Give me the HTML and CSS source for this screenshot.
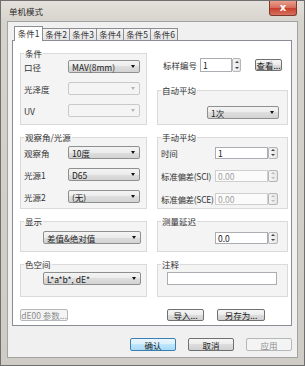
FILE: index.html
```html
<!DOCTYPE html>
<html>
<head>
  <title>单机模式</title>
  <link rel="stylesheet" href="styles.css">
</head>
<body>

  <div class="window">
    <div class="titlebar">
      <span class="title">单机模式</span>
      <span class="close">x</span>
    </div>

    <div class="client">
      <div class="tabs">
        <span class="tab active">条件1</span>
        <span class="tab">条件2</span>
        <span class="tab">条件3</span>
        <span class="tab">条件4</span>
        <span class="tab">条件5</span>
        <span class="tab">条件6</span>
      </div>

      <div class="page">
        <div class="grid">

          <!-- 条件 -->
          <fieldset class="group">
            <legend>条件</legend>
            <div class="rows rows-left">
              <div class="row"><label>口径</label><div class="combo">MAV(8mm)<i class="arrow"></i></div></div>
              <div class="row"><label>光泽度</label><div class="combo off"><i class="arrow"></i></div></div>
              <div class="row"><label>UV</label><div class="combo off"><i class="arrow"></i></div></div>
            </div>
          </fieldset>

          <div class="stack">
            <div class="sample">
              <label>标样编号</label>
              <div class="edit sample-edit">1</div>
              <div class="spin"><i class="up"></i><i class="down"></i></div>
              <button class="btn view">查看...</button>
            </div>
            <fieldset class="group auto">
              <legend>自动平均</legend>
              <div class="combo auto-combo">1次<i class="arrow"></i></div>
            </fieldset>
          </div>

          <!-- 观察角/光源 -->
          <fieldset class="group">
            <legend>观察角/光源</legend>
            <div class="rows rows-mid">
              <div class="row"><label>观察角</label><div class="combo">10度<i class="arrow"></i></div></div>
              <div class="row"><label>光源1</label><div class="combo">D65<i class="arrow"></i></div></div>
              <div class="row"><label>光源2</label><div class="combo">(无)<i class="arrow"></i></div></div>
            </div>
          </fieldset>

          <fieldset class="group">
            <legend>手动平均</legend>
            <div class="rows rows-right">
              <div class="row"><label class="wide-label">时间</label><div class="edit num">1</div><div class="spin"><i class="up"></i><i class="down"></i></div></div>
              <div class="row"><label class="wide-label">标准偏差(SCI)</label><div class="edit num off">0.00</div><div class="spin off"><i class="up"></i><i class="down"></i></div></div>
              <div class="row"><label class="wide-label">标准偏差(SCE)</label><div class="edit num off">0.00</div><div class="spin off"><i class="up"></i><i class="down"></i></div></div>
            </div>
          </fieldset>

          <!-- 显示 -->
          <fieldset class="group">
            <legend>显示</legend>
            <div class="single">
              <div class="combo wide">差值&amp;绝对值<i class="arrow"></i></div>
            </div>
          </fieldset>

          <fieldset class="group">
            <legend>测量延迟</legend>
            <div class="single">
              <div class="row"><label class="wide-label"></label><div class="edit num">0.0</div><div class="spin"><i class="up"></i><i class="down"></i></div></div>
            </div>
          </fieldset>

          <!-- 色空间 -->
          <fieldset class="group">
            <legend>色空间</legend>
            <div class="single single-low">
              <div class="combo wide">L*a*b*, dE*<i class="arrow"></i></div>
            </div>
          </fieldset>

          <fieldset class="group">
            <legend>注释</legend>
            <div class="single single-low">
              <div class="edit note"></div>
            </div>
          </fieldset>

        </div>

        <div class="page-buttons">
          <button class="btn dE00" disabled>dE00 参数...</button>
          <button class="btn import">导入...</button>
          <button class="btn saveas">另存为...</button>
        </div>
      </div>

      <div class="dialog-buttons">
        <button class="btn default">确认</button>
        <button class="btn">取消</button>
        <button class="btn" disabled>应用</button>
      </div>
    </div>
  </div>

</body>
</html>
```

FILE: styles.css
```css
* {
  box-sizing: border-box;
}

body {
  margin: 0;
  font-family: "Noto Sans CJK SC", "Liberation Sans", sans-serif;
  font-size: 8.5px;
  line-height: 10px;
  color: #333;
  background: #d2cec8;
}

/* window frame */

.window {
  width: 305px;
  height: 366px;
  border: 1px solid #6f6f6f;
  background: linear-gradient(#e4e1dc, #d6d2cc 22px, #cfcbc5);
  padding: 0 6px 7px 6px;
  display: flex;
  flex-direction: column;
}

.titlebar {
  height: 20px;
  display: flex;
  justify-content: space-between;
}

.title {
  margin: 5px 0 0 2px;
  color: #2a2a2a;
}

.close {
  width: 28px;
  height: 15px;
  margin-right: 1px;
  border: 1px solid #7d3a30;
  border-top: none;
  border-radius: 0 0 3px 3px;
  background: linear-gradient(#eb9f8e, #d66a59 50%, #c73c2a 50%, #d7725f);
  color: #fff;
  font-family: "DejaVu Sans", sans-serif;
  font-weight: bold;
  font-size: 10px;
  line-height: 13px;
  text-align: center;
}

.client {
  flex: 1;
  background: #f0f0f0;
  border: 1px solid #a3a3a3;
  padding: 4px 5px 0 4px;
  display: flex;
  flex-direction: column;
}

/* tabs */

.tabs {
  display: flex;
  align-items: flex-end;
  height: 15px;
  margin: 0 0 -1px 2px;
  position: relative;
  z-index: 1;
}

.tab {
  width: 27px;
  height: 12px;
  margin-bottom: 1px;
  border: 1px solid #8c8e94;
  border-bottom: none;
  border-left: none;
  background: linear-gradient(#f3f3f3, #e4e4e4);
  text-align: center;
  line-height: 11px;
}

.tab.active {
  width: 29px;
  height: 15px;
  margin-bottom: 0;
  border-left: 1px solid #8c8e94;
  background: #fff;
  line-height: 13px;
}

.page {
  height: 286px;
  background: #fff;
  border: 1px solid #898c95;
  padding: 7px 3px 0 7px;
}

/* group boxes */

.grid {
  display: grid;
  grid-template-columns: 127px 131px;
  grid-template-rows: 77px 77px 36px 38px;
  column-gap: 10px;
  row-gap: 7px;
}

.group {
  margin: 0;
  min-width: 0;
  height: 100%;
  border: 1px solid #dadada;
  background: #f4f4f4;
  padding: 0 3px;
}

.group legend {
  padding: 0 1px;
  line-height: 10px;
}

.rows {
  display: flex;
  flex-direction: column;
}

.rows-left {
  gap: 9px;
  padding-top: 2px;
}

.rows-mid {
  gap: 9px;
  padding-top: 4px;
}

.rows-right {
  gap: 10px;
  padding-top: 4px;
}

.row {
  display: flex;
  align-items: center;
  height: 13px;
}

.row label {
  width: 44px;
  flex-shrink: 0;
  white-space: nowrap;
}

.row .wide-label {
  width: 54px;
  letter-spacing: -0.3px;
}

.single {
  padding-top: 5px;
}

.single-low {
  padding-top: 3px;
}

.stack {
  display: flex;
  flex-direction: column;
}

.sample {
  display: flex;
  align-items: center;
  height: 14px;
  margin-top: 10px;
  padding-left: 6px;
}

.sample label {
  width: 37px;
}

.auto {
  margin-top: 13px;
  height: auto;
  flex: 1;
}

.auto-combo {
  width: 71px;
  margin: 11px 0 0 46px;
}

/* controls */

.combo {
  display: flex;
  align-items: center;
  justify-content: space-between;
  width: 72px;
  height: 13px;
  padding: 0 4px 0 3px;
  border: 1px solid #8e8f8f;
  border-radius: 2px;
  background: linear-gradient(#f4f4f4, #ebebeb 50%, #dedede 50%, #d3d3d3);
  color: #222;
}

.combo.wide {
  width: 98px;
  margin-left: 19px;
}

.combo.off {
  border-color: #c9c9c9;
  background: #f4f4f4;
}

.arrow {
  width: 0;
  height: 0;
  margin-left: auto;
  border-left: 2.5px solid transparent;
  border-right: 2.5px solid transparent;
  border-top: 3px solid #111;
}

.combo.off .arrow {
  border-top-color: #b5b5b5;
}

.edit {
  height: 12px;
  padding-left: 2px;
  border: 1px solid #abadb3;
  background: #fff;
  line-height: 10px;
  color: #222;
}

.edit.off {
  border-color: #cfcfcf;
  background: #fbfbfb;
  color: #a0a0a0;
}

.sample-edit {
  width: 32px;
  height: 14px;
  line-height: 12px;
}

.num {
  width: 53px;
}

.note {
  width: 110px;
  height: 13px;
  margin-left: 6px;
}

.spin {
  display: flex;
  flex-direction: column;
  width: 10px;
  height: 12px;
  border: 1px solid #b5b5b5;
  border-radius: 2px;
  background: linear-gradient(90deg, #f5f5f5, #e6e6e6);
}

.sample .spin {
  width: 9px;
  height: 14px;
}

.spin i {
  flex: 1;
  display: flex;
  align-items: center;
  justify-content: center;
}

.spin i::after {
  content: "";
  border-left: 2px solid transparent;
  border-right: 2px solid transparent;
}

.spin .up::after {
  border-bottom: 2px solid #444;
}

.spin .down::after {
  border-top: 2px solid #444;
}

.spin.off .up::after {
  border-bottom-color: #bbb;
}

.spin.off .down::after {
  border-top-color: #bbb;
}

.btn {
  height: 12px;
  padding: 0;
  border: 1px solid #707070;
  border-radius: 2px;
  background: linear-gradient(#f6f6f6, #ebebeb 50%, #dddddd 50%, #d0d0d0);
  font: inherit;
  line-height: 10px;
  color: #222;
  text-align: center;
}

.btn:disabled {
  border-color: #b4b8bb;
  background: #f4f4f4;
  color: #8c8c8c;
}

.btn.default {
  border-color: #3c7fb1;
  background: linear-gradient(#eaf6fd, #d9f0fc 50%, #bee6fd 50%, #a7d9f5);
}

.view {
  width: 27px;
  margin-left: 14px;
}

.page-buttons {
  display: flex;
  margin-top: 12px;
}

.dE00 {
  width: 48px;
}

.import {
  width: 37px;
  margin-left: 99px;
}

.saveas {
  width: 48px;
  margin-left: 13px;
}

.dialog-buttons {
  display: flex;
  justify-content: flex-end;
  gap: 12px;
  margin-top: 12px;
}

.dialog-buttons .btn {
  width: 46px;
  height: 13px;
}
```
